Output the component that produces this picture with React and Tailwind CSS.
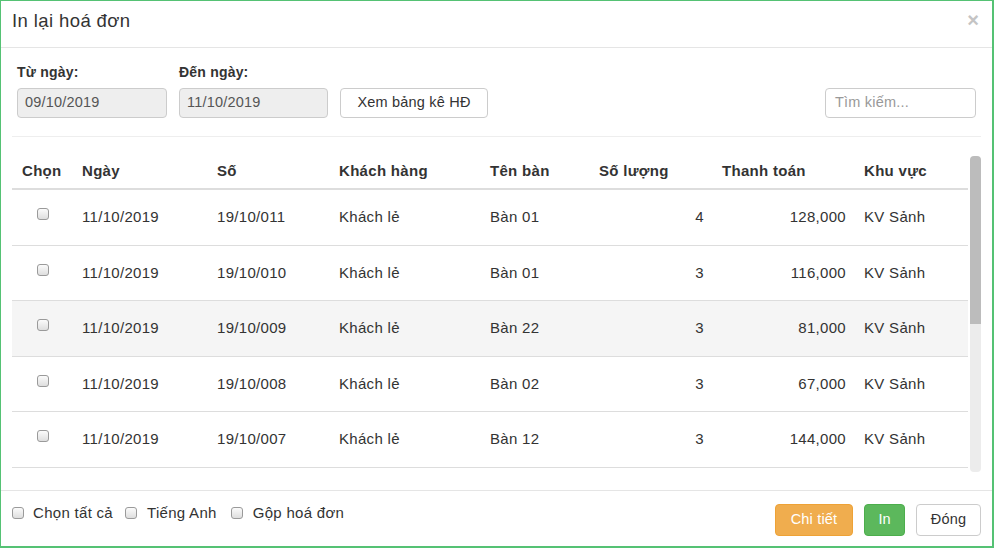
import React from "react";

const ROWS = [
  { date: "11/10/2019", no: "19/10/011", customer: "Khách lẻ", table: "Bàn 01", qty: 4, total: "128,000", area: "KV Sảnh" },
  { date: "11/10/2019", no: "19/10/010", customer: "Khách lẻ", table: "Bàn 01", qty: 3, total: "116,000", area: "KV Sảnh" },
  { date: "11/10/2019", no: "19/10/009", customer: "Khách lẻ", table: "Bàn 22", qty: 3, total: "81,000", area: "KV Sảnh", active: true },
  { date: "11/10/2019", no: "19/10/008", customer: "Khách lẻ", table: "Bàn 02", qty: 3, total: "67,000", area: "KV Sảnh" },
  { date: "11/10/2019", no: "19/10/007", customer: "Khách lẻ", table: "Bàn 12", qty: 3, total: "144,000", area: "KV Sảnh" },
];

function Box() {
  return (
    <span className="inline-block h-[12px] w-[12px] rounded-[3px] border border-[#9a9a9a] bg-gradient-to-b from-[#fbfbfb] to-[#dedede]" />
  );
}

const COLS = "grid grid-cols-[62px_135px_122px_151px_109px_121px_142px_1fr]";

export default function App() {
  return (
    <div
      className="h-[548px] w-[994px] overflow-hidden border-l border-t border-r-2 border-b-2 border-[#55c274] bg-white text-[#333]"
      style={{ fontFamily: '"Liberation Sans", Arial, sans-serif' }}
    >
      {/* header */}
      <div className="flex h-[47px] items-center justify-between border-b border-[#e5e5e5] pb-[6px] pl-[11px] pr-[13px]">
        <h4 className="text-[18.5px] leading-none tracking-[0.4px]">In lại hoá đơn</h4>
        <span className="mb-[2px] text-[20px] font-bold leading-none text-[#c4c4c4]">×</span>
      </div>

      {/* filters */}
      <div className="mx-[11px] flex items-end border-b border-[#eee] pb-[18px] pl-[5px] pt-[16px]">
        <div className="mr-[12px] flex flex-col">
          <label className="mb-[8px] text-[14px] font-bold leading-[16px] tracking-[0.2px]">Từ ngày:</label>
          <div className="flex h-[30px] w-[150px] items-center rounded-[4px] border border-[#ccc] bg-[#eee] px-[7px] text-[14.5px] tracking-[0.2px] text-[#555]">09/10/2019</div>
        </div>
        <div className="mr-[12px] flex flex-col">
          <label className="mb-[8px] text-[14px] font-bold leading-[16px] tracking-[0.2px]">Đến ngày:</label>
          <div className="flex h-[30px] w-[149px] items-center rounded-[4px] border border-[#ccc] bg-[#eee] px-[7px] text-[14.5px] tracking-[0.2px] text-[#555]">11/10/2019</div>
        </div>
        <button className="flex h-[30px] w-[148px] items-center justify-center rounded-[4px] border border-[#ccc] bg-white text-[14.5px] tracking-[0.2px] text-[#333]">
          Xem bảng kê HĐ
        </button>
        <div className="ml-auto mr-[5px] flex h-[30px] w-[151px] items-center rounded-[4px] border border-[#ccc] px-[9px] text-[14.5px] tracking-[0.2px] text-[#999]">
          Tìm kiếm...
        </div>
      </div>

      {/* table */}
      <div className="ml-[11px] mr-[11px] mt-[14px] flex h-[323px] overflow-hidden">
        <div className="flex-1 text-[15px] tracking-[0.3px]">
          <div className={`${COLS} h-[39px] items-center border-b-2 border-[#ddd] pt-[4px] font-bold`}>
            <div className="pl-[10px]">Chọn</div>
            <div className="pl-[8px]">Ngày</div>
            <div className="pl-[8px]">Số</div>
            <div className="pl-[8px]">Khách hàng</div>
            <div className="pl-[8px]">Tên bàn</div>
            <div className="pl-[8px]">Số lượng</div>
            <div className="pl-[10px]">Thanh toán</div>
            <div className="pl-[10px]">Khu vực</div>
          </div>
          {ROWS.map((r) => (
            <div
              key={r.no}
              className={`${COLS} h-[55.5px] shrink-0 items-center border-b border-[#ddd] ${r.active ? "bg-[#f5f5f5]" : ""}`}
            >
              <div className="flex justify-center pb-[6px]">
                <Box />
              </div>
              <div className="pl-[8px]">{r.date}</div>
              <div className="pl-[8px]">{r.no}</div>
              <div className="pl-[8px]">{r.customer}</div>
              <div className="pl-[8px]">{r.table}</div>
              <div className="pr-[8px] text-right">{r.qty}</div>
              <div className="pr-[8px] text-right">{r.total}</div>
              <div className="pl-[10px]">{r.area}</div>
            </div>
          ))}
        </div>
        <div className="ml-[2px] flex w-[11px] flex-col pt-[5px]">
          <div className="h-[168px] rounded-t-[4px] bg-[#bcbcbc]" />
          <div className="mb-[2px] flex-1 rounded-b-[4px] bg-[#ececec]" />
        </div>
      </div>

      {/* footer */}
      <div className="mt-[16px] flex h-[58px] items-start border-t border-[#e5e5e5] pl-[11px] pr-[11px] pt-[13px]">
        <div className="-mt-[2px] flex items-center text-[15px] tracking-[0.3px]">
          <Box />
          <span className="ml-[9px]">Chọn tất cả</span>
          <span className="ml-[12px] flex"><Box /></span>
          <span className="ml-[10px]">Tiếng Anh</span>
          <span className="ml-[14px] flex"><Box /></span>
          <span className="ml-[10px]">Gộp hoá đơn</span>
        </div>
        <div className="ml-auto flex gap-[11px]">
          <button className="h-[32px] w-[78px] rounded-[4px] border border-[#eea236] bg-[#f0ad4e] text-[14.5px] tracking-[0.2px] text-white">Chi tiết</button>
          <button className="h-[32px] w-[41px] rounded-[4px] border border-[#4cae4c] bg-[#5cb85c] text-[14.5px] text-white">In</button>
          <button className="h-[32px] w-[65px] rounded-[4px] border border-[#ccc] bg-white text-[14.5px] tracking-[0.2px] text-[#333]">Đóng</button>
        </div>
      </div>
    </div>
  );
}
